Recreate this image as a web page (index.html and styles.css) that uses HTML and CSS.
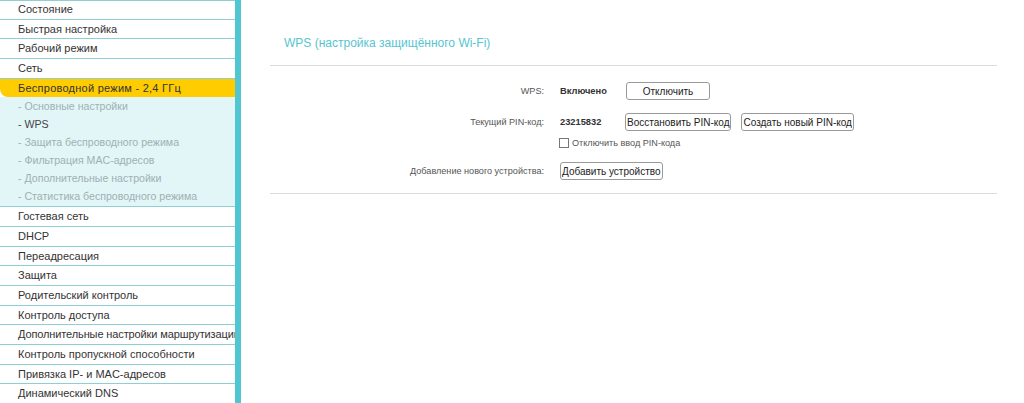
FILE: index.html
```html
<!DOCTYPE html>
<html lang="ru">
<head>
<meta charset="utf-8">
<link rel="stylesheet" href="styles.css">
</head>
<body>
<div class="page">
  <nav class="menu">
    <div class="item first">Состояние</div>
    <div class="item">Быстрая настройка</div>
    <div class="item">Рабочий режим</div>
    <div class="item">Сеть</div>
    <div class="item active">Беспроводной режим - 2,4 ГГц</div>
    <div class="sub">
      <div class="subitem">- Основные настройки</div>
      <div class="subitem current">- WPS</div>
      <div class="subitem">- Защита беспроводного режима</div>
      <div class="subitem">- Фильтрация MAC-адресов</div>
      <div class="subitem">- Дополнительные настройки</div>
      <div class="subitem">- Статистика беспроводного режима</div>
    </div>
    <div class="item">Гостевая сеть</div>
    <div class="item">DHCP</div>
    <div class="item">Переадресация</div>
    <div class="item">Защита</div>
    <div class="item">Родительский контроль</div>
    <div class="item">Контроль доступа</div>
    <div class="item narrow">Дополнительные настройки маршрутизации</div>
    <div class="item">Контроль пропускной способности</div>
    <div class="item">Привязка IP- и MAC-адресов</div>
    <div class="item">Динамический DNS</div>
  </nav>
  <main class="content">
    <h1 class="title">WPS (настройка защищённого Wi-Fi)</h1>
    <div class="form">
      <div class="label">WPS:</div>
      <div class="field"><span class="value">Включено</span><button class="btn wide">Отключить</button></div>
      <div class="label pin">Текущий PIN-код:</div>
      <div class="field pin"><span class="value">23215832</span><button class="btn">Восстановить PIN-код</button><button class="btn">Создать новый PIN-код</button></div>
      <div class="label"></div>
      <div class="field check"><span class="box"></span><span>Отключить ввод PIN-кода</span></div>
      <div class="label add">Добавление нового устройства:</div>
      <div class="field add"><button class="btn">Добавить устройство</button></div>
    </div>
  </main>
</div>
</body>
</html>
```

FILE: styles.css
```css
html, body {
  margin: 0;
  padding: 0;
  background: #ffffff;
  font-family: "Liberation Sans", Arial, sans-serif;
  font-size: 11px;
  color: #333;
}
.page {
  display: flex;
  align-items: flex-start;
  height: 403px;
  overflow: hidden;
}
.menu {
  width: 235px;
  flex: none;
  border-right: 6px solid #4fc6d2;
  min-height: 403px;
  background: #fff;
}
.item {
  box-sizing: border-box;
  height: 19.7px;
  line-height: 18px;
  padding-left: 18px;
  border-bottom: 1.5px solid #8fcfd3;
  color: #333;
  white-space: nowrap;
  overflow: hidden;
}
.item.narrow {
  letter-spacing: -0.12px;
}
.item.first {
  border-top: 1.5px solid #8fcfd3;
  line-height: 17px;
}
.item.active {
  background: #ffcc00;
  border-bottom: none;
  border-bottom-left-radius: 8px;
  height: 18.5px;
  letter-spacing: 0.25px;
}
.sub {
  background: #e2f6f7;
  border-bottom: 1.5px solid #8fcfd3;
  padding: 0 0 1px 0;
}
.subitem {
  height: 18px;
  line-height: 18px;
  padding-left: 18px;
  font-size: 10.6px;
  color: #9fb0b2;
  white-space: nowrap;
}
.subitem.current {
  color: #444;
}
.content {
  flex: 1;
  padding: 0 27px 0 29px;
}
.title {
  margin: 0;
  padding: 36px 0 0 14px;
  height: 29px;
  font-size: 12px;
  font-weight: normal;
  color: #56c5cf;
  border-bottom: 1px solid #dcdcdc;
}
.form {
  display: grid;
  grid-template-columns: 274px 1fr;
  column-gap: 16px;
  padding: 17px 0 12px;
  border-bottom: 1px solid #dcdcdc;
  color: #555;
  font-size: 9.1px;
}
.label {
  text-align: right;
  height: 22px;
  line-height: 16px;
}
.field {
  display: flex;
  align-items: center;
  height: 18px;
  margin-bottom: 14px;
  margin-top: -1px;
}
.field.pin { margin-bottom: 2px; }
.field.check {
  height: 14px;
  margin-top: 0;
  margin-bottom: 13px;
  gap: 3px;
}
.value {
  font-weight: bold;
  color: #333;
  width: 65px;
  font-size: 9.3px;
}
.btn {
  box-sizing: border-box;
  height: 18px;
  padding: 0 1px;
  font-family: "Liberation Sans", Arial, sans-serif;
  font-size: 10px;
  color: #222;
  background: #fff;
  border: 1px solid #9a9a9a;
  border-radius: 3px;
  margin-right: 10px;
}
.btn.wide {
  width: 84px;
  margin-left: 1px;
}
.box {
  width: 8px;
  height: 8px;
  margin-left: -1px;
  border: 1px solid #777;
  background: #fff;
}
.field.add { margin-bottom: 0; }
.label.add { height: 18px; }
```
